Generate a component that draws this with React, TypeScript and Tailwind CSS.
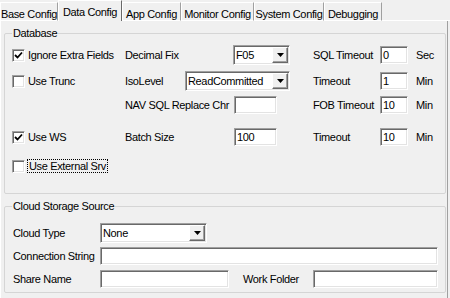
import React from "react";

// Win32-style helpers
function Check({ checked }: { checked?: boolean }) {
  return (
    <div className="w-[13px] h-[13px] shrink-0 bg-white border border-t-[#a0a0a0] border-l-[#a0a0a0] border-r-white border-b-white shadow-[inset_1px_1px_0_#696969,inset_-1px_-1px_0_#e3e3e3] flex items-center justify-center">
      {checked && (
        <svg width="9" height="9" viewBox="0 0 9 9">
          <path d="M1 4 L3.5 6.5 L8 1.5" stroke="#000" strokeWidth="1.8" fill="none" />
        </svg>
      )}
    </div>
  );
}

function TextBox({ w, value }: { w: string; value?: string }) {
  return (
    <div
      className={`${w} h-[18px] shrink-0 bg-white border border-t-[#a0a0a0] border-l-[#a0a0a0] border-r-white border-b-white shadow-[inset_1px_1px_0_#696969,inset_-1px_-1px_0_#e3e3e3] flex items-center pl-[2px] leading-none`}
    >
      {value}
    </div>
  );
}

function Combo({ w, value }: { w: string; value: string }) {
  return (
    <div
      className={`${w} h-[20px] shrink-0 bg-white border border-t-[#a0a0a0] border-l-[#a0a0a0] border-r-white border-b-white shadow-[inset_1px_1px_0_#696969,inset_-1px_-1px_0_#e3e3e3] flex items-stretch p-[1px]`}
    >
      <div className="flex-1 flex items-center pl-[1px] leading-none">{value}</div>
      <div className="w-[16px] bg-[#f0f0f0] border border-t-white border-l-white border-r-[#696969] border-b-[#696969] shadow-[inset_-1px_-1px_0_#a0a0a0] flex items-center justify-center">
        <svg width="7" height="4" viewBox="0 0 7 4">
          <path d="M0 0 H7 L3.5 4 Z" fill="#000" />
        </svg>
      </div>
    </div>
  );
}

function Tab({ label, w, active }: { label: string; w: string; active?: boolean }) {
  return active ? (
    <div className={`${w} h-[21px] shrink-0 border-t border-l border-white border-r border-r-[#696969] flex items-start justify-center pt-[3px]`}>
      {label}
    </div>
  ) : (
    <div className={`${w} h-[19px] shrink-0 border-t border-l border-white border-r border-r-[#a0a0a0] border-b border-b-white flex items-start justify-center pt-[3px]`}>
      {label}
    </div>
  );
}

function GroupBox({ title, className, children }: { title: string; className: string; children: React.ReactNode }) {
  return (
    <div className={`relative border border-[#d5d5d5] rounded-[2px] ${className}`}>
      <span className="absolute -top-[7px] left-[7px] bg-[#f0f0f0] px-[1px] leading-[13px]">{title}</span>
      {children}
    </div>
  );
}

export default function App() {
  return (
    <div className="w-[450px] h-[298px] bg-[#f0f0f0] text-[11px] tracking-[-0.35px] whitespace-nowrap text-black font-['Liberation_Sans',Arial,sans-serif] overflow-hidden">
      {/* tab strip */}
      <div className="flex items-end h-[21px]">
        <Tab label="Base Config" w="w-[58px]" />
        <Tab label="Data Config" w="w-[64px]" active />
        <Tab label="App Config" w="w-[59px]" />
        <Tab label="Monitor Config" w="w-[73px]" />
        <Tab label="System Config" w="w-[70px]" />
        <Tab label="Debugging" w="w-[58px]" />
        <div className="flex-1 h-[1px] bg-white" />
      </div>

      {/* tab page */}
      <div className="w-[448px] h-[277px] border-l border-white border-r border-r-[#a0a0a0] pl-[3px] pt-[12px]">
        <GroupBox title="Database" className="w-[442px] h-[161px] pl-[7px]">
          <div className="flex items-center h-[20px] mt-[11px]">
            <div className="w-[113px] flex items-center">
              <Check checked />
              <span className="ml-[3px]">Ignore Extra Fields</span>
            </div>
            <div className="w-[188px] flex items-center">
              <span className="w-[108px]">Decimal Fix</span>
              <Combo w="w-[57px]" value="F05" />
            </div>
            <span className="w-[67px]">SQL Timeout</span>
            <TextBox w="w-[28px]" value="0" />
            <span className="ml-[8px]">Sec</span>
          </div>

          <div className="flex items-center h-[20px] mt-[6px]">
            <div className="w-[113px] flex items-center">
              <Check />
              <span className="ml-[3px]">Use Trunc</span>
            </div>
            <div className="w-[188px] flex items-center">
              <span className="w-[60px]">IsoLevel</span>
              <Combo w="w-[105px]" value="ReadCommitted" />
            </div>
            <span className="w-[67px]">Timeout</span>
            <TextBox w="w-[28px]" value="1" />
            <span className="ml-[8px]">Min</span>
          </div>

          <div className="flex items-center h-[20px] mt-[4px]">
            <div className="w-[113px]" />
            <div className="w-[188px] flex items-center">
              <span className="w-[109px]">NAV SQL Replace Chr</span>
              <TextBox w="w-[43px]" />
            </div>
            <span className="w-[67px]">FOB Timeout</span>
            <TextBox w="w-[28px]" value="10" />
            <span className="ml-[8px]">Min</span>
          </div>

          <div className="flex items-center h-[20px] mt-[12px]">
            <div className="w-[113px] flex items-center">
              <Check checked />
              <span className="ml-[3px]">Use WS</span>
            </div>
            <div className="w-[188px] flex items-center">
              <span className="w-[109px]">Batch Size</span>
              <TextBox w="w-[43px]" value="100" />
            </div>
            <span className="w-[67px]">Timeout</span>
            <TextBox w="w-[28px]" value="10" />
            <span className="ml-[8px]">Min</span>
          </div>

          <div className="flex items-center h-[20px] mt-[9px]">
            <Check />
            <span className="ml-[2px] px-[1px] border border-dotted border-black leading-[12px]">Use External Srv</span>
          </div>
        </GroupBox>

        <GroupBox title="Cloud Storage Source" className="w-[442px] h-[87px] mt-[12px] pl-[8px]">
          <div className="flex items-center h-[20px] mt-[16px]">
            <span className="w-[87px]">Cloud Type</span>
            <Combo w="w-[107px]" value="None" />
          </div>
          <div className="flex items-center h-[18px] mt-[4px]">
            <span className="w-[87px]">Connection String</span>
            <TextBox w="w-[338px]" />
          </div>
          <div className="flex items-center h-[18px] mt-[5px]">
            <span className="w-[87px]">Share Name</span>
            <TextBox w="w-[129px]" />
            <span className="w-[70px] ml-[14px]">Work Folder</span>
            <TextBox w="w-[125px]" />
          </div>
        </GroupBox>
      </div>
    </div>
  );
}
